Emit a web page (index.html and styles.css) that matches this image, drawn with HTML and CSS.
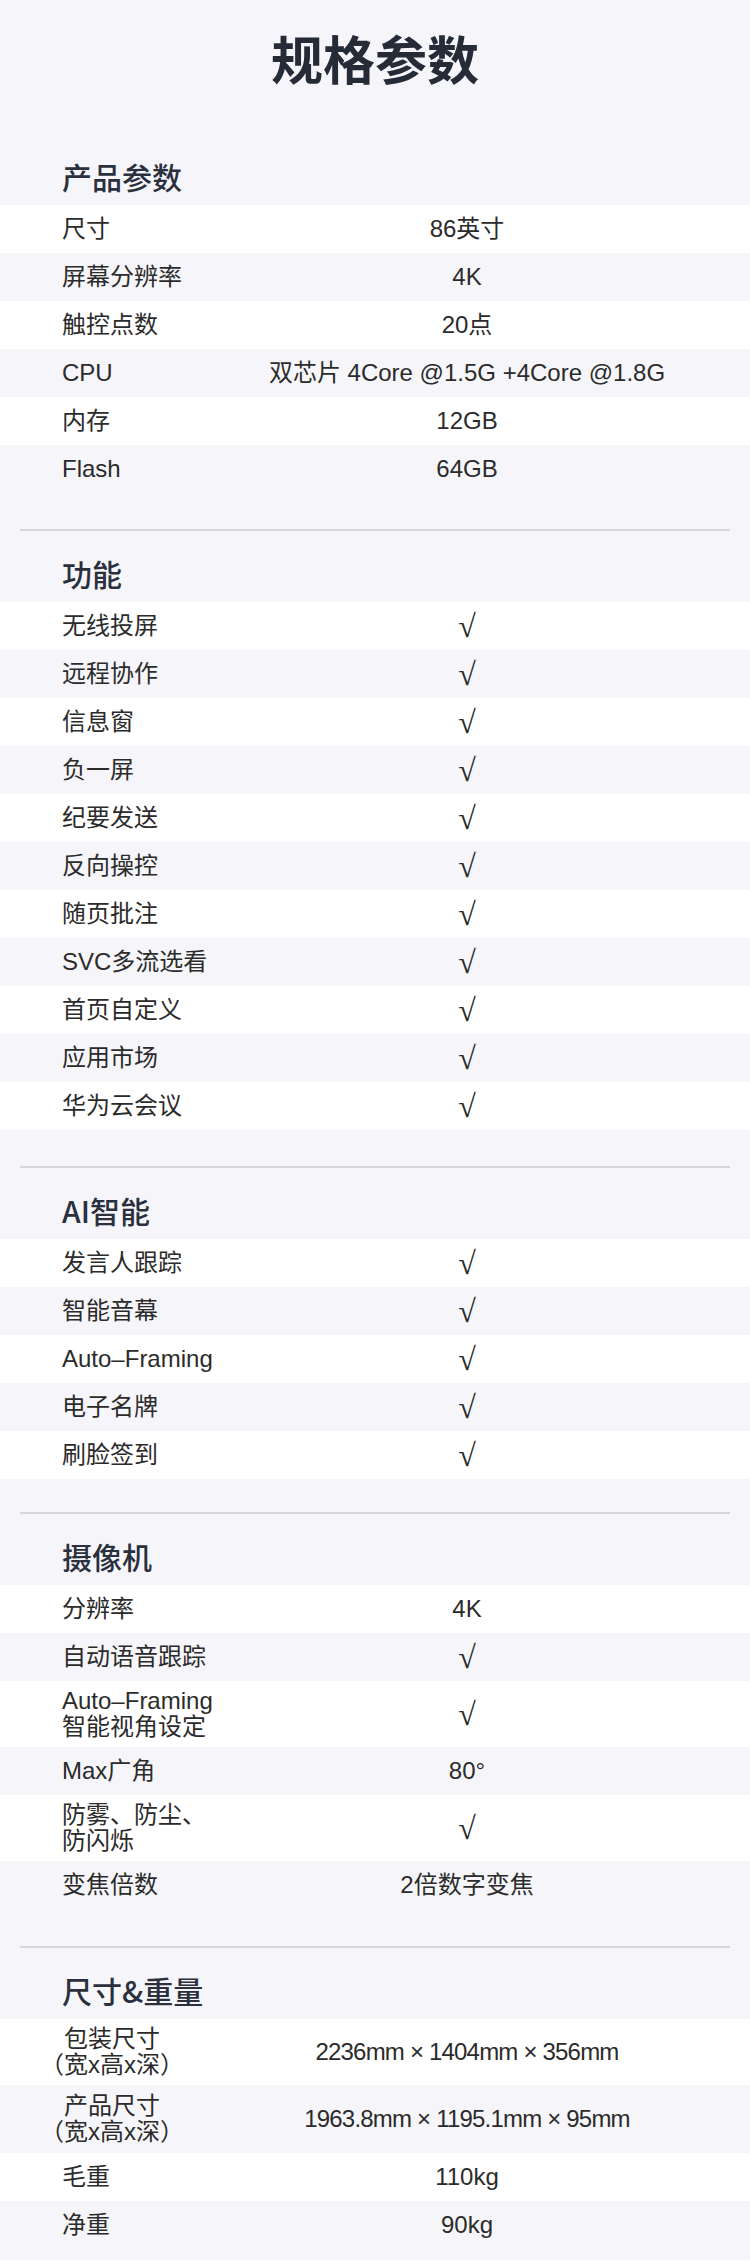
FILE: index.html
```html
<!DOCTYPE html>
<html lang="zh-CN">
<head>
  <meta charset="utf-8" />
  <title>规格参数</title>
  <link rel="stylesheet" href="styles.css">
</head>

<body>
  <div class="page">
    <h1 class="title">规格参数</h1>

    <!-- 产品参数 -->
    <section class="group">
      <h2 class="group-title">产品参数</h2>
      <div class="row"><span class="label">尺寸</span><span class="value">86英寸</span></div>
      <div class="row"><span class="label">屏幕分辨率</span><span class="value">4K</span></div>
      <div class="row"><span class="label">触控点数</span><span class="value">20点</span></div>
      <div class="row"><span class="label">CPU</span><span class="value">双芯片 4Core @1.5G +4Core @1.8G</span></div>
      <div class="row"><span class="label">内存</span><span class="value">12GB</span></div>
      <div class="row"><span class="label">Flash</span><span class="value">64GB</span></div>
    </section>
    <hr class="divider">

    <!-- 功能 -->
    <section class="group">
      <h2 class="group-title">功能</h2>
      <div class="row"><span class="label">无线投屏</span><span class="value check">√</span></div>
      <div class="row"><span class="label">远程协作</span><span class="value check">√</span></div>
      <div class="row"><span class="label">信息窗</span><span class="value check">√</span></div>
      <div class="row"><span class="label">负一屏</span><span class="value check">√</span></div>
      <div class="row"><span class="label">纪要发送</span><span class="value check">√</span></div>
      <div class="row"><span class="label">反向操控</span><span class="value check">√</span></div>
      <div class="row"><span class="label">随页批注</span><span class="value check">√</span></div>
      <div class="row"><span class="label">SVC多流选看</span><span class="value check">√</span></div>
      <div class="row"><span class="label">首页自定义</span><span class="value check">√</span></div>
      <div class="row"><span class="label">应用市场</span><span class="value check">√</span></div>
      <div class="row"><span class="label">华为云会议</span><span class="value check">√</span></div>
    </section>
    <hr class="divider">

    <!-- AI智能 -->
    <section class="group group-ai">
      <h2 class="group-title">AI智能</h2>
      <div class="row"><span class="label">发言人跟踪</span><span class="value check">√</span></div>
      <div class="row"><span class="label">智能音幕</span><span class="value check">√</span></div>
      <div class="row"><span class="label">Auto–Framing</span><span class="value check">√</span></div>
      <div class="row"><span class="label">电子名牌</span><span class="value check">√</span></div>
      <div class="row"><span class="label">刷脸签到</span><span class="value check">√</span></div>
    </section>
    <hr class="divider">

    <!-- 摄像机 -->
    <section class="group group-camera">
      <h2 class="group-title">摄像机</h2>
      <div class="row"><span class="label">分辨率</span><span class="value">4K</span></div>
      <div class="row"><span class="label">自动语音跟踪</span><span class="value check">√</span></div>
      <div class="row row-tall"><span class="label">Auto–Framing<br>智能视角设定</span><span class="value check">√</span></div>
      <div class="row"><span class="label">Max广角</span><span class="value">80°</span></div>
      <div class="row row-tall"><span class="label">防雾、防尘、<br>防闪烁</span><span class="value check">√</span></div>
      <div class="row"><span class="label">变焦倍数</span><span class="value">2倍数字变焦</span></div>
    </section>
    <hr class="divider">

    <!-- 尺寸&重量 -->
    <section class="group group-last">
      <h2 class="group-title">尺寸&amp;重量</h2>
      <div class="row row-tall">
        <span class="label label-stack"><span>包装尺寸</span><span>（宽x高x深）</span></span>
        <span class="value dims">2236mm × 1404mm × 356mm</span>
      </div>
      <div class="row row-tall row-taller">
        <span class="label label-stack"><span>产品尺寸</span><span>（宽x高x深）</span></span>
        <span class="value dims">1963.8mm × 1195.1mm × 95mm</span>
      </div>
      <div class="row"><span class="label">毛重</span><span class="value">110kg</span></div>
      <div class="row"><span class="label">净重</span><span class="value">90kg</span></div>
    </section>
  </div>
</body>
</html>
```

FILE: styles.css
```css
html {
  background: #ffffff;
}

body {
  margin: 0;
  font-family: "Liberation Sans", "Noto Sans CJK SC", sans-serif;
  color: #2b2b2b;
}

.page {
  width: 750px;
  min-height: 2260px;
  background: #f6f6fa;
}

.title {
  margin: 0;
  padding: 28px 0 46px;
  line-height: 60px;
  font-size: 52px;
  font-weight: bold;
  text-align: center;
  color: #262b38;
  font-family: "Noto Sans CJK SC", sans-serif;
}

.group {
  padding-bottom: 36px;
}

.group-ai {
  padding-bottom: 33px;
}

.group-camera {
  padding-bottom: 37px;
}

.group-last {
  padding-bottom: 9px;
}

.group-title {
  margin: 0;
  padding: 27px 0 14px 62px;
  line-height: 30px;
  font-size: 30px;
  font-weight: 500;
  color: #2a303d;
  font-family: "Noto Sans CJK SC", sans-serif;
}

.divider {
  margin: 0 20px;
  height: 2px;
  border: none;
  background: #d6d6dc;
}

.row {
  display: grid;
  grid-template-columns: 122px 1fr;
  align-items: center;
  min-height: 48px;
  padding-left: 62px;
  font-size: 24px;
  line-height: 26px;
  box-sizing: border-box;
}

.row:nth-child(even) {
  background: #ffffff;
}

.row-tall {
  padding-top: 7px;
  padding-bottom: 7px;
}

.row-taller {
  padding-top: 8px;
  padding-bottom: 8px;
}

.label {
  white-space: nowrap;
}

.label-stack {
  display: flex;
  flex-direction: column;
  align-items: center;
  width: 100px;
}

.value {
  text-align: center;
  white-space: nowrap;
}

.check {
  font-family: "Liberation Serif", serif;
  font-size: 32px;
  line-height: 26px;
}

.dims {
  letter-spacing: -0.8px;
}
```
